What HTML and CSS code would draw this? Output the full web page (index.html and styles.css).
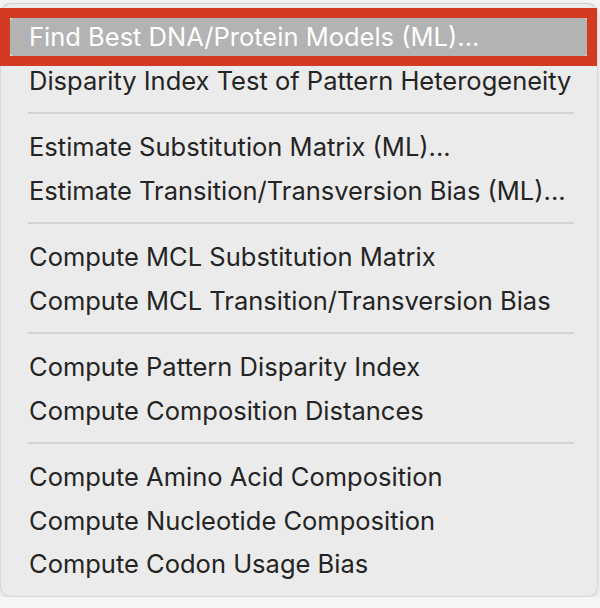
FILE: index.html
```html
<!DOCTYPE html>
<html lang="en">
<head>
  <meta charset="UTF-8" />
  <title>Models menu</title>
  <link rel="stylesheet" href="styles.css">
</head>
<body>

  <div class="menu">
    <!-- Grupo 1 -->
    <div class="item active">Find Best DNA/Protein Models (ML)...</div>
    <div class="item">Disparity Index Test of Pattern Heterogeneity</div>
    <div class="sep"></div>

    <!-- Grupo 2 -->
    <div class="item">Estimate Substitution Matrix (ML)...</div>
    <div class="item">Estimate Transition/Transversion Bias (ML)...</div>
    <div class="sep"></div>

    <!-- Grupo 3 -->
    <div class="item">Compute MCL Substitution Matrix</div>
    <div class="item">Compute MCL Transition/Transversion Bias</div>
    <div class="sep"></div>

    <!-- Grupo 4 -->
    <div class="item">Compute Pattern Disparity Index</div>
    <div class="item">Compute Composition Distances</div>
    <div class="sep"></div>

    <!-- Grupo 5 -->
    <div class="item">Compute Amino Acid Composition</div>
    <div class="item">Compute Nucleotide Composition</div>
    <div class="item">Compute Codon Usage Bias</div>

    <!-- Marco rojo de la captura -->
    <div class="callout"></div>
  </div>

</body>
</html>
```

FILE: styles.css
```css
/* Estilos generales */
body {
  margin: 0;
  background: #f5f5f5;
  font-family: Inter, "Liberation Sans", Arial, sans-serif;
}

/* Panel del menu */
.menu {
  position: relative;
  box-sizing: border-box;
  display: flex;
  flex-direction: column;
  width: 598px;
  height: 594px;
  margin-top: 3px;
  padding: 11.25px 9px 13px;
  background: #ebebeb;
  border: 1px solid #d9d9d9;
  border-top-color: #cfcfcf;
  border-radius: 11px;
  box-shadow: 0 3px 8px rgba(0, 0, 0, 0.12);
}

/* Cada opcion */
.item {
  flex: none;
  height: 38px;
  margin: 2.75px 0;
  padding-left: 19px;
  line-height: 38px;
  font-size: 25.5px;
  color: #242424;
  white-space: nowrap;
  border-radius: 4px;
}

.item.active {
  background: #b3b3b3;
  color: #fff;
}

/* Separador */
.sep {
  flex: none;
  height: 2px;
  margin: 10px 14px 11px 18px;
  background: #d3d3d3;
}

/* Marco rojo encima de la primera opcion */
.callout {
  position: absolute;
  left: -1px;
  top: 4px;
  width: 577px;
  height: 38px;
  border: 10px solid #d33a22;
}
```
